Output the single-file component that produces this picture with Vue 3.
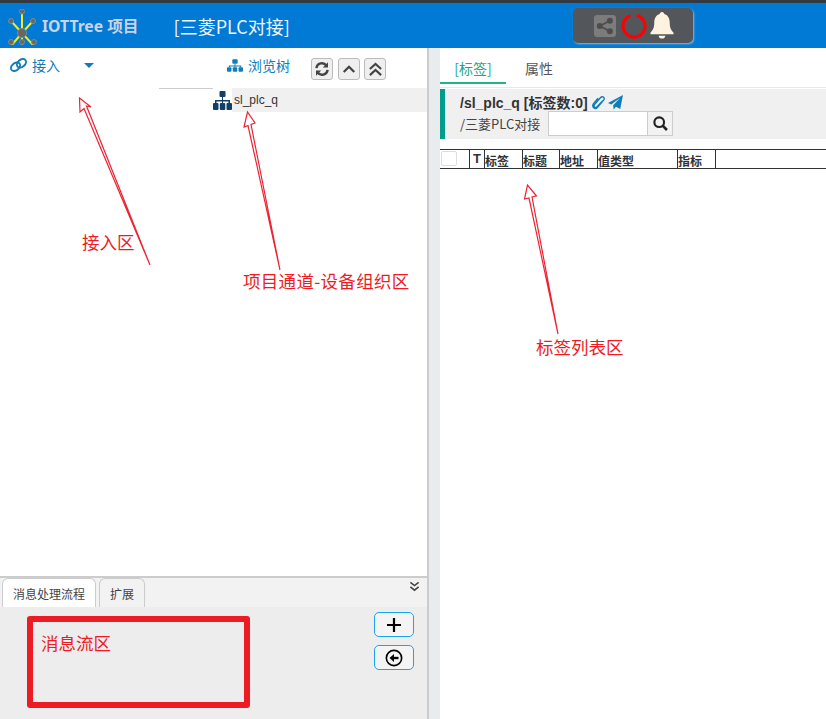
<script setup>
const columns = [
  { label: '标签', w: 38 },
  { label: '标题', w: 37 },
  { label: '地址', w: 38 },
  { label: '值类型', w: 80 },
  { label: '指标', w: 38 },
]
const arrows = [
  'M150 265 L86.500 106 L91 107 L79.500 98 L80 112 L84 108.500 Z',
  'M280 270 L251 124.500 L255 123 L247.500 112 L244 127 L248 125.500 Z',
  'M558 334 L532 197 L536.500 196 L527.500 185 L524.500 199 L529 198 Z',
]
</script>

<template>
  <div class="page">
    <header class="topbar">
      <svg class="logo" viewBox="0 0 30 36" width="30" height="36">
        <g stroke="#f4ea1c" stroke-width="2" fill="none">
          <path d="M14 24 L14 3 M14 24 L25 12 M14 24 L3 12 M14 24 L3 37 M14 24 L26 37 M14 24 L14 37" />
        </g>
        <g fill="#666" stroke="#888" stroke-width="1">
          <circle cx="14" cy="2.500" r="2.500" />
          <circle cx="25" cy="12" r="2.500" />
          <circle cx="3" cy="12" r="2.500" />
          <circle cx="3" cy="33" r="2.500" />
          <circle cx="14" cy="33" r="2.500" />
          <circle cx="26" cy="33" r="2.500" />
          <circle cx="14" cy="24" r="4.500" />
        </g>
      </svg>
      <span class="brand">IOTTree 项目</span>
      <span class="project">[三菱PLC对接]</span>
      <div class="status">
        <span class="share">
          <svg viewBox="0 0 24 24" width="18" height="18" fill="#4d4d4d">
            <circle cx="18.500" cy="5" r="4" />
            <circle cx="18.500" cy="19" r="4" />
            <circle cx="5" cy="12" r="4" />
            <path d="M5 12 L18.500 5 M5 12 L18.500 19" stroke="#4d4d4d" stroke-width="2.500" />
          </svg>
        </span>
        <svg class="ring" viewBox="0 0 26 26" width="26" height="26">
          <circle cx="13" cy="13" r="11" fill="none" stroke="#f00" stroke-width="3.200" stroke-dasharray="62 7" transform="rotate(-75 13 13)" />
        </svg>
        <svg class="bell" viewBox="0 0 24 28" width="24" height="27" fill="#fff3e0">
          <path d="M12 0 C13.500 0 14.300 1 14.300 2.200 C18 3.200 20 6.500 20 11 C20 16.500 21.500 19 24 21.500 L24 23 L0 23 L0 21.500 C2.500 19 4 16.500 4 11 C4 6.500 6 3.200 9.700 2.200 C9.700 1 10.500 0 12 0 Z" />
          <path d="M8.500 24.500 L15.500 24.500 C15.200 26.500 13.800 27.500 12 27.500 C10.200 27.500 8.800 26.500 8.500 24.500 Z" />
        </svg>
      </div>
    </header>

    <main class="workspace">
      <section class="left">
        <div class="left-top">
          <div class="toolbar">
            <span class="tool-link connect">
              <svg viewBox="0 0 20 16" width="17" height="14" fill="none" stroke="#107cb8" stroke-width="2.200">
                <ellipse cx="6.500" cy="10" rx="6" ry="4.200" transform="rotate(-40 6.500 10)" />
                <ellipse cx="13.500" cy="6" rx="6" ry="4.200" transform="rotate(-40 13.500 6)" />
              </svg>
              接入
            </span>
            <span class="caret"></span>
            <span class="tool-link browse">
              <svg viewBox="0 0 18 14" width="16" height="13" fill="#107cb8">
                <rect x="6" y="0" width="6" height="5" rx="1" />
                <rect x="0" y="9" width="5" height="5" rx="1" />
                <rect x="6.500" y="9" width="5" height="5" rx="1" />
                <rect x="13" y="9" width="5" height="5" rx="1" />
                <path d="M8.500 5 h1 v2 h6.500 v2 h-1.200 v-1 h-5.300 v1 h-1 v-1 h-5.300 v1 h-1.200 v-2 h6.500 z" />
              </svg>
              浏览树
            </span>
            <div class="tool-buttons">
              <button class="mini">
                <svg viewBox="0 0 20 20" width="16" height="16" fill="none" stroke="#444" stroke-width="3">
                  <path d="M3 9 A7 7 0 0 1 15.500 5.500" />
                  <path d="M17 11 A7 7 0 0 1 4.500 14.500" />
                  <path d="M17.500 1.500 V8 H11 Z M2.500 18.500 V12 H9 Z" fill="#444" stroke="none" />
                </svg>
              </button>
              <button class="mini">
                <svg viewBox="0 0 16 16" width="14" height="14" fill="none" stroke="#444" stroke-width="2.600">
                  <path d="M2 11.500 L8 5.500 L14 11.500" />
                </svg>
              </button>
              <button class="mini">
                <svg viewBox="0 0 16 16" width="15" height="15" fill="none" stroke="#444" stroke-width="2.200">
                  <path d="M2 7.500 L8 2 L14 7.500 M2 14 L8 8.500 L14 14" />
                </svg>
              </button>
            </div>
          </div>
          <div class="tree">
            <div class="tree-line"></div>
            <svg class="tree-icon" viewBox="0 0 19 19" width="19" height="19" fill="#123f66">
              <rect x="6.500" y="0" width="6" height="6" rx="1" />
              <rect x="0" y="12" width="5.500" height="7" rx="1" />
              <rect x="6.800" y="12" width="5.500" height="7" rx="1" />
              <rect x="13.500" y="12" width="5.500" height="7" rx="1" />
              <path d="M9 6 h1 v3 h7 v3 h-1.500 v-1.500 h-5.500 v1.500 h-1 v-1.500 h-5.500 v1.500 h-1.500 v-3 h7 z" />
            </svg>
            <div class="tree-row">sl_plc_q</div>
          </div>
        </div>
        <div class="flow-panel">
          <div class="flow-tabs">
            <span class="flow-tab">消息处理流程</span>
            <span class="flow-tab">扩展</span>
            <svg class="collapse" viewBox="0 0 12 12" width="11" height="11" fill="none" stroke="#444" stroke-width="1.700">
              <path d="M1.500 1.500 L6 5 L10.500 1.500 M1.500 6.500 L6 10 L10.500 6.500" />
            </svg>
          </div>
          <div class="flow-body">
            <div class="flow-zone">消息流区</div>
            <div class="flow-actions">
              <button class="flow-btn">
                <svg viewBox="0 0 16 16" width="16" height="16" stroke="#000" stroke-width="2.200">
                  <path d="M8 1 V15 M1 8 H15" />
                </svg>
              </button>
              <button class="flow-btn">
                <svg viewBox="0 0 20 20" width="18" height="18" fill="none" stroke="#000" stroke-width="1.800">
                  <circle cx="10" cy="10" r="8.500" />
                  <path d="M15 10 H8" stroke-width="2.600" />
                  <path d="M10 5.500 L5 10 L10 14.500 Z" fill="#000" stroke="none" />
                </svg>
              </button>
            </div>
          </div>
        </div>
      </section>

      <div class="gutter"></div>

      <section class="right">
        <nav class="tabs">
          <span class="tab active">[标签]</span>
          <span class="tab">属性</span>
        </nav>
        <div class="info">
          <div class="info-title">
            <span class="title-text">/sl_plc_q [标签数:0]</span>
            <svg viewBox="0 0 14 16" width="15" height="15" fill="none" stroke="#107cb8" stroke-width="1.500">
              <path d="M11.500 6 L5.500 12.500 C3.500 14.500 1 12.500 3 10 L9 3 C11.500 0.500 14.500 3 12.500 5.500 L6 13 C3.500 16 -0.500 13 1.500 9.500 L6.500 3.500" />
            </svg>
            <svg viewBox="0 0 16 16" width="15" height="15" fill="#107cb8">
              <path d="M16 0 L13 15 L8.500 12.500 L6 15.500 L5.500 11 L13 3 L3.500 10 L0 8.500 Z" />
            </svg>
          </div>
          <div class="info-path">
            <span>/三菱PLC对接</span>
            <div class="search">
              <input class="search-input" type="text" aria-label="搜索" />
              <button class="search-btn">
                <svg viewBox="0 0 14 14" width="15" height="15" fill="none" stroke="#222" stroke-width="2">
                  <circle cx="5.800" cy="5.800" r="4.500" />
                  <path d="M9 9 L13 13" stroke-width="2.500" />
                </svg>
              </button>
            </div>
          </div>
        </div>
        <div class="grid-head">
          <div class="cell check"><span class="checkbox"></span></div>
          <div class="cell t">T</div>
          <div v-for="c in columns" :key="c.label" class="cell" :style="{ width: c.w + 'px' }">{{ c.label }}</div>
        </div>
      </section>
    </main>

    <svg class="annot" viewBox="0 0 826 719" width="826" height="719">
      <path v-for="(d, i) in arrows" :key="i" :d="d" fill="#fff" stroke="#ee2233" stroke-width="1.200" />
    </svg>
    <span class="note n1">接入区</span>
    <span class="note n2">项目通道-设备组织区</span>
    <span class="note n3">标签列表区</span>
  </div>
</template>

<style scoped>
.page {
  position: relative;
  width: 826px;
  height: 719px;
  overflow: hidden;
  display: flex;
  flex-direction: column;
  background: #fff;
  font-family: "Noto Sans CJK SC", "Noto Sans", sans-serif;
  color: #333;
}
.topbar {
  height: 48px;
  box-sizing: border-box;
  flex: none;
  border-top: 3px solid #343a40;
  background: #007ad4;
  display: flex;
  align-items: center;
  position: relative;
}
.logo {
  margin: 6px 0 0 8px;
  align-self: flex-start;
}
.brand {
  margin-left: 4px;
  font-size: 15.700px;
  font-weight: 700;
  color: #cdd3e6;
  white-space: nowrap;
  font-family: "Noto Sans", "Noto Sans CJK SC", sans-serif;
}
.project {
  margin-left: 35px;
  font-size: 18px;
  color: #f0f4fa;
  white-space: nowrap;
}
.status {
  position: absolute;
  left: 573px;
  top: 5px;
  width: 120px;
  height: 35px;
  box-sizing: border-box;
  border-radius: 5px;
  background: #53565a;
  box-shadow: 1px 1px 2px rgba(200, 210, 220, 0.7);
  display: flex;
  align-items: center;
  padding-left: 21px;
}
.share {
  width: 22px;
  height: 22px;
  border-radius: 3px;
  background: #7c7c7c;
  display: flex;
  align-items: center;
  justify-content: center;
}
.ring { margin-left: 5px; }
.bell { margin-left: 3px; }
.workspace {
  flex: 1;
  display: flex;
  min-height: 0;
}
.left {
  width: 427px;
  flex: none;
  display: flex;
  flex-direction: column;
  border-right: 2px solid #ccc;
  box-sizing: content-box;
}
.left-top {
  flex: 1;
  min-height: 0;
}
.toolbar {
  height: 40px;
  box-sizing: border-box;
  padding-bottom: 6px;
  display: flex;
  align-items: center;
  position: relative;
  font-size: 14px;
  color: #107cb8;
}
.tool-link {
  display: inline-flex;
  align-items: center;
  gap: 5px;
  white-space: nowrap;
}
.connect { margin-left: 10px; }
.caret {
  margin-left: 24px;
  width: 0;
  height: 0;
  border: 5px solid transparent;
  border-top: 5px solid #107cb8;
  border-bottom: 0;
}
.browse { margin-left: 133px; }
.tool-buttons {
  margin-left: 21px;
  display: flex;
  gap: 4.500px;
  margin-top: 8px;
}
.mini {
  width: 22px;
  height: 22px;
  padding: 0;
  box-sizing: border-box;
  border: 1px solid #bbb;
  border-radius: 3px;
  background: #efefef;
  display: flex;
  align-items: center;
  justify-content: center;
}
.tree {
  position: relative;
  height: 24px;
  display: flex;
  align-items: flex-start;
  padding-left: 213px;
}
.tree-line {
  position: absolute;
  left: 159px;
  top: 0;
  width: 54px;
  height: 1px;
  background: #ccc;
}
.tree-icon {
  flex: none;
  margin-top: 3px;
}
.tree-row {
  flex: 1;
  height: 24px;
  background: #f0f0f0;
  font-size: 12px;
  line-height: 24px;
  padding-left: 2px;
  font-family: "Liberation Sans", sans-serif;
  color: #333;
}
.flow-panel {
  height: 143px;
  flex: none;
  box-sizing: border-box;
  border-top: 2px solid #ccc;
  background: #ededed;
  display: flex;
  flex-direction: column;
}
.flow-tabs {
  height: 29px;
  flex: none;
  display: flex;
  align-items: flex-end;
  gap: 3px;
  padding-left: 2px;
  background: #f2f2f2;
  position: relative;
}
.flow-tab {
  height: 29px;
  box-sizing: border-box;
  padding: 0 10px;
  border: 1px solid #ccc;
  border-bottom: 0;
  border-radius: 6px 6px 0 0;
  font-size: 12px;
  line-height: 29px;
  color: #444;
  background: #f2f2f2;
}
.flow-tab:first-child {
  background: #fff;
}
.collapse {
  position: absolute;
  right: 7px;
  top: 3px;
}
.flow-body {
  flex: 1;
  display: flex;
  align-items: flex-start;
  padding: 5px 13px 0 27px;
  justify-content: space-between;
}
.flow-zone {
  width: 223px;
  height: 92px;
  box-sizing: border-box;
  margin-top: 4px;
  border: 6px solid #ed1c24;
  border-radius: 3px;
  padding: 8px 0 0 8px;
  color: #ed1c24;
  font-size: 17.500px;
  line-height: 26px;
}
.flow-actions {
  display: flex;
  flex-direction: column;
  gap: 8px;
}
.flow-btn {
  width: 40px;
  height: 25px;
  padding: 0;
  box-sizing: border-box;
  border: 1px solid #1aa3ef;
  border-radius: 5px;
  background: #f4f4f4;
  display: flex;
  align-items: center;
  justify-content: center;
}
.gutter {
  width: 11px;
  flex: none;
  background: #e9ecef;
}
.right {
  flex: 1;
  min-width: 0;
}
.tabs {
  height: 40px;
  box-sizing: border-box;
  padding-top: 8px;
  display: flex;
  border-bottom: 1px solid #e8e8e8;
  font-size: 14px;
  line-height: 24px;
}
.tab {
  width: 66px;
  height: 28px;
  box-sizing: border-box;
  text-align: center;
  color: #555;
}
.tab.active {
  color: #1fa58c;
  border-bottom: 2px solid #20b585;
}
.info {
  height: 50px;
  margin-top: 1px;
  box-sizing: border-box;
  border-left: 5px solid #009e8a;
  background: #f0f0f0;
  padding: 4px 0 0 15px;
}
.info-title {
  display: flex;
  align-items: center;
  gap: 2px;
  height: 18px;
  font-size: 14px;
  font-weight: 700;
  color: #333;
  white-space: nowrap;
  font-family: "Liberation Sans", "Noto Sans CJK SC", sans-serif;
}
.title-text { margin-right: 1px; }
.info-path {
  display: flex;
  align-items: center;
  gap: 8px;
  font-size: 13px;
  color: #444;
}
.search { display: flex; }
.search-input {
  width: 100px;
  height: 25px;
  padding: 0;
  box-sizing: border-box;
  border: 1px solid #ccc;
  background: #fff;
}
.search-btn {
  width: 25px;
  height: 25px;
  padding: 0;
  box-sizing: border-box;
  border: 1px solid #ccc;
  border-left: 0;
  background: #f2f2f2;
  display: flex;
  align-items: center;
  justify-content: center;
}
.grid-head {
  margin-top: 10px;
  height: 20px;
  box-sizing: border-box;
  border-top: 1px solid #333;
  border-bottom: 1px solid #333;
  display: flex;
}
.cell {
  box-sizing: border-box;
  border-right: 1px solid #333;
  font-size: 12px;
  font-weight: 700;
  line-height: 22px;
  color: #333;
  white-space: nowrap;
}
.check {
  width: 30px;
  padding: 1px 0 0 1px;
}
.checkbox {
  display: block;
  width: 16px;
  height: 15px;
  box-sizing: border-box;
  border: 1px solid #ddd;
  border-radius: 2px;
  background: #fff;
}
.t {
  width: 15px;
  font-family: "Liberation Sans", sans-serif;
  font-size: 13px;
  line-height: 18px;
  text-align: center;
}
.annot {
  position: absolute;
  left: 0;
  top: 0;
  pointer-events: none;
}
.note {
  position: absolute;
  color: #ed1c24;
  font-size: 17.500px;
  line-height: 24px;
  white-space: nowrap;
}
.n1 { left: 82px; top: 230px; }
.n2 { left: 243px; top: 269px; letter-spacing: 0.300px; }
.n3 { left: 536px; top: 335px; }
</style>
